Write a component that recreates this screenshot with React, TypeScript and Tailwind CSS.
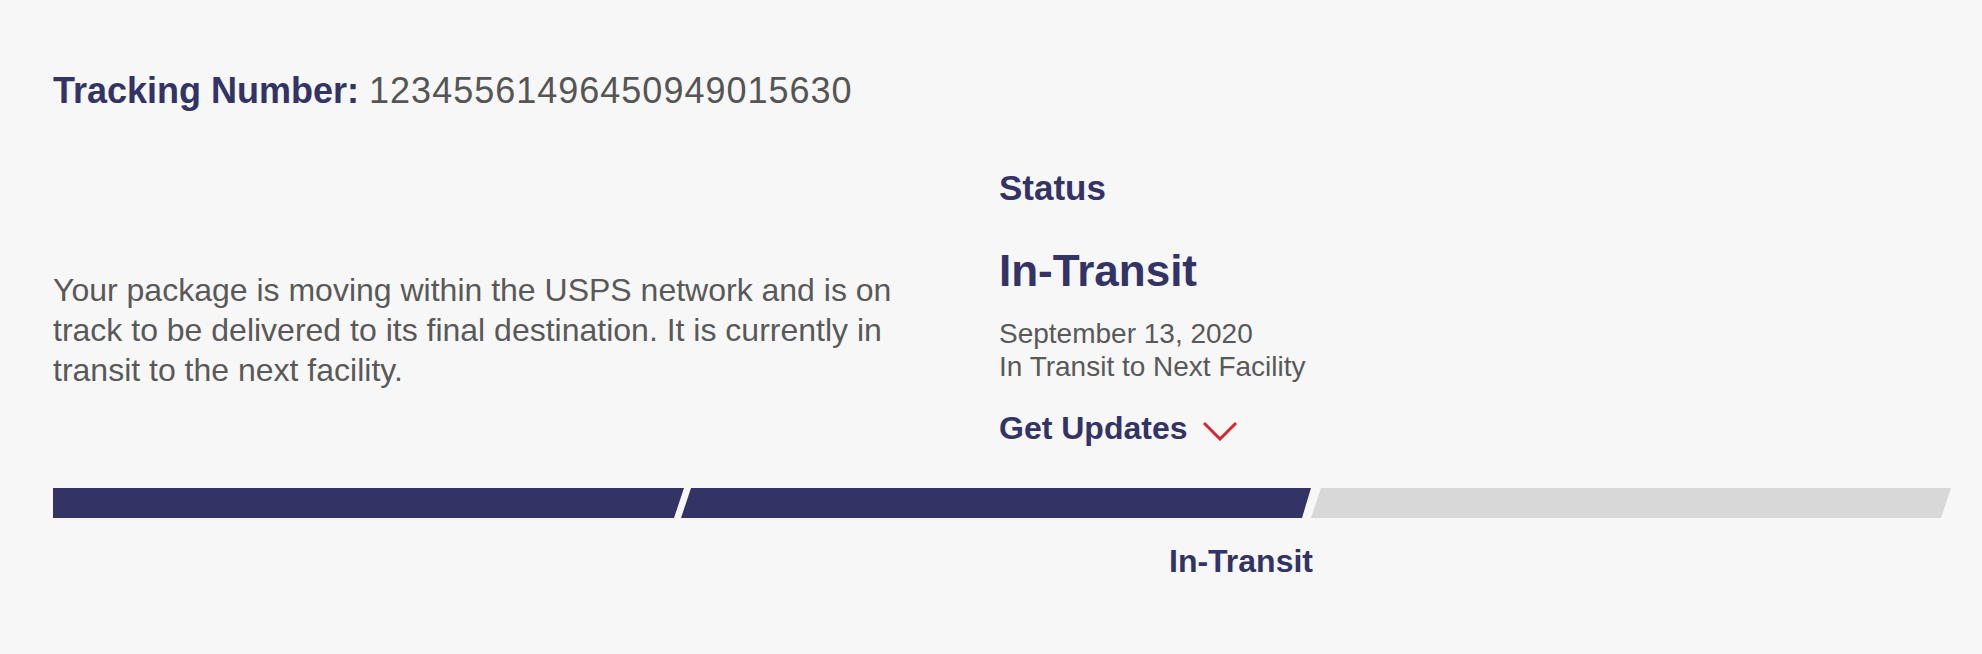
const navy = "text-[#333366]";

const Chevron = () => (
  <svg width="36" height="20" viewBox="0 0 36 20" className="ml-[15px] mt-[6px]">
    <polyline points="2,2 18,18 34,2" fill="none" stroke="#d7262c" strokeWidth="3" />
  </svg>
);

const ProgressBar = () => {
  return (
    <div className="flex h-[30px] w-[1898px]">
      <div className="h-full w-[631px] bg-[#333366] [clip-path:polygon(0_0,100%_0,calc(100%-10px)_100%,0_100%)]" />
      <div className="-ml-[3px] h-full w-[630px] bg-[#333366] [clip-path:polygon(10px_0,100%_0,calc(100%-9px)_100%,0_100%)]" />
      <div className="h-full w-[640px] bg-[#d8d8d8] [clip-path:polygon(10px_0,100%_0,calc(100%-10px)_100%,0_100%)]" />
    </div>
  );
};

export default function App() {
  return (
    <div className="min-h-screen w-full bg-[#f7f7f7] pl-[53px] pt-[73px] pb-[80px] font-['Liberation_Sans',Arial,sans-serif]">
      <div className="flex items-baseline text-[36px] leading-none">
        <span className={`font-bold ${navy}`}>Tracking Number:</span>
        <span className="ml-[10px] tracking-[1px] text-[#555555]">12345561496450949015630</span>
      </div>

      <div className="mt-[61px] flex">
        <div className="w-[946px] pt-[100px]">
          <p className="w-[880px] text-[32px] leading-[40px] text-[#595959]">
            Your package is moving within the USPS network and is on track to be delivered to its final destination. It is currently in transit to the next facility.
          </p>
        </div>
        <div className="flex flex-col">
          <h3 className={`text-[35px] font-bold leading-none ${navy}`}>Status</h3>
          <h2 className={`mt-[44px] text-[44px] font-bold leading-none ${navy}`}>In-Transit</h2>
          <div className="mt-[24px] text-[28px] leading-[33px] text-[#595959]">
            <p>September 13, 2020</p>
            <p>In Transit to Next Facility</p>
          </div>
          <button className={`mt-[29px] flex items-center text-[32px] font-bold leading-none ${navy}`}>
            Get Updates
            <Chevron />
          </button>
        </div>
      </div>

      <div className="mt-[44px]">
        <ProgressBar />
        <div className="mt-[27px] flex">
          <div className="w-[631px]" />
          <div className={`w-[629px] text-right text-[32px] font-bold leading-none ${navy}`}>In-Transit</div>
        </div>
      </div>
    </div>
  );
}
